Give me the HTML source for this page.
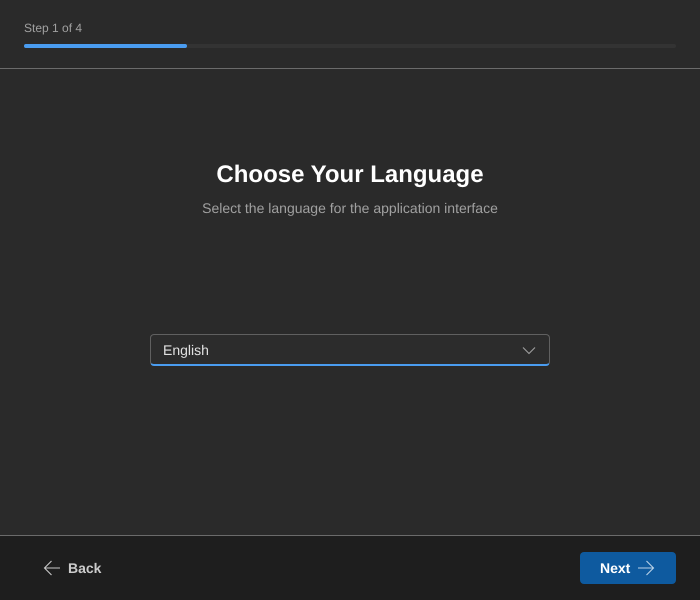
<!DOCTYPE html>
<html>
<head>
<meta charset="utf-8">
<style>
html,body{margin:0;padding:0;width:700px;height:600px;overflow:hidden;background:#2a2a2a;font-family:"Liberation Sans",sans-serif;text-rendering:geometricPrecision;}
.abs{position:absolute;white-space:nowrap;}
</style>
</head>
<body>
<div class="abs" style="left:24px;top:21px;font-size:12px;line-height:14px;color:#a0a0a0;">Step 1 of 4</div>
<div class="abs" style="left:24px;top:44px;width:652px;height:4px;background:#333333;border-radius:2px;"></div>
<div class="abs" style="left:24px;top:44px;width:163px;height:4px;background:#4a9cf0;border-radius:2px;"></div>
<div class="abs" style="left:0;top:68px;width:700px;height:1px;background:#6b6b6b;"></div>

<div class="abs" style="left:0;top:159px;width:700px;text-align:center;font-size:24px;line-height:32px;font-weight:700;color:#ffffff;">Choose Your Language</div>
<div class="abs" style="left:0;top:199px;width:700px;text-align:center;font-size:14px;line-height:18px;color:#a0a0a0;">Select the language for the application interface</div>

<div class="abs" style="left:150px;top:334px;width:398px;height:29px;border:1px solid #606060;border-bottom:2px solid #4a9cf0;border-radius:4px;background:#2c2c2c;"></div>
<div class="abs" style="left:163px;top:342px;font-size:14px;line-height:16px;color:#e0e0e0;">English</div>
<svg class="abs" style="left:522px;top:346px;" width="14" height="10" viewBox="0 0 14 10"><path d="M1 1.5 L7 7.5 L13 1.5" fill="none" stroke="#a0a0a0" stroke-width="1.1"/></svg>

<div class="abs" style="left:0;top:535px;width:700px;height:65px;background:#1e1e1e;"></div>
<div class="abs" style="left:0;top:535px;width:700px;height:1px;background:#6b6b6b;"></div>

<svg class="abs" style="left:43px;top:560px;" width="18" height="16" viewBox="0 0 18 16"><path d="M17 8 H1.5 M8.5 1 L1.5 8 L8.5 15" fill="none" stroke="#c8c8c8" stroke-width="1.1"/></svg>
<div class="abs" style="left:68px;top:560px;font-size:14px;line-height:16px;font-weight:700;color:#cccccc;">Back</div>

<div class="abs" style="left:580px;top:552px;width:96px;height:32px;background:#0e5a9f;border-radius:4px;"></div>
<div class="abs" style="left:600px;top:560px;font-size:14px;line-height:16px;font-weight:700;color:#ffffff;">Next</div>
<svg class="abs" style="left:637px;top:560px;" width="18" height="16" viewBox="0 0 18 16"><path d="M1 8 H16.5 M9.5 1 L16.5 8 L9.5 15" fill="none" stroke="#b9d2e8" stroke-width="1.1"/></svg>
</body>
</html>
